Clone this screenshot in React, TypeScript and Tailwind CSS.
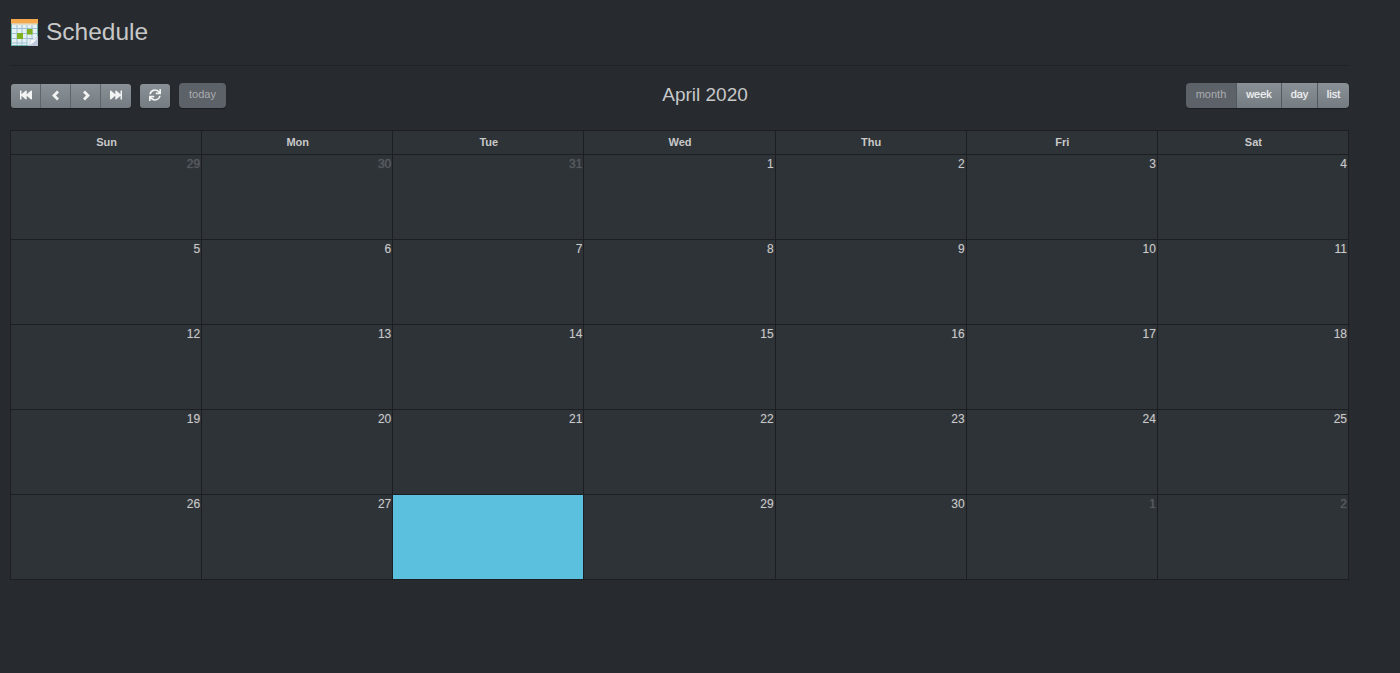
import React from "react";
import { FaFastBackward, FaFastForward, FaSync } from "react-icons/fa";

const days = ["Sun", "Mon", "Tue", "Wed", "Thu", "Fri", "Sat"];
const cells: { n: number; muted?: boolean; today?: boolean }[] = [
  { n: 29, muted: true }, { n: 30, muted: true }, { n: 31, muted: true },
  ...Array.from({ length: 30 }, (_, i) => ({ n: i + 1, today: i === 27 })),
  { n: 1, muted: true }, { n: 2, muted: true },
];

function CalendarIcon() {
  return (
    <svg width="27" height="27" viewBox="0 0 27 27" className="shrink-0">
      <rect x="0" y="0" width="27" height="27" fill="#e4f0f2" />
      <rect x="0" y="0" width="27" height="4.5" fill="#f4a94e" />
      <rect x="0" y="4.5" width="27" height="1" fill="#e0c89a" />
      <path d="M1 9.5H26M1 14.5H26M1 19.5H22M1 24H16M6 6V26M11 6V26M16 6V26M21 6V20" stroke="#9fc0d4" strokeWidth="1" />
      <rect x="6" y="14" width="6" height="6" fill="#7fb01f" />
      <rect x="16" y="10" width="5.5" height="5.5" fill="#7fb01f" />
      <path d="M17 27L27 17V27Z" fill="#bfcbdc" />
      <path d="M17 27C20 24.5 19.5 22 19 20C22 21 25 20 27 17C26 21 23 25 17 27Z" fill="#f6f8fb" stroke="#a7b7ca" strokeWidth="0.5" />
      <path d="M0.4 4.5V26.6H17M26.6 4.5V17" fill="none" stroke="#3d9a96" strokeWidth="0.8" />
    </svg>
  );
}

function Chevron({ dir }: { dir: "left" | "right" }) {
  return (
    <svg width="10" height="11" viewBox="0 0 10 11">
      <path
        d={dir === "left" ? "M7 1.5L3 5.5L7 9.5" : "M3 1.5L7 5.5L3 9.5"}
        fill="none"
        stroke="#f2f3f3"
        strokeWidth="2.8"
      />
    </svg>
  );
}

const btn = "h-full flex items-center justify-center bg-gradient-to-b from-[#8a9196] to-[#747c82] text-[#f2f3f3] pb-px";
const heavy = "[text-shadow:0_0_1px_rgba(255,255,255,0.55)]";

export default function App() {
  return (
    <div className="min-h-[673px] w-[1400px] bg-[#272b30] pl-[10px] font-['Liberation_Sans',Arial,sans-serif]">
      <div className="w-[1339px]">
        <div className="flex h-[66px] items-start gap-[8px] border-b border-[#1f2226] pt-[19px] pl-px">
          <CalendarIcon />
          <h1 className="text-[24.5px] leading-[25px] text-[#c8c8c8]">Schedule</h1>
        </div>
        <div className="mt-[17px] flex h-[25px] items-center justify-between">
          <div className="flex h-full items-center">
            <div className="ml-px flex h-[24px] overflow-hidden rounded-[3px] shadow-[0_1px_1px_#1c1e22]">
              <button className={`${btn} w-[30px] border-r border-[#5f666b] text-[12px]`}><FaFastBackward /></button>
              <button className={`${btn} w-[30px] border-r border-[#5f666b]`}><Chevron dir="left" /></button>
              <button className={`${btn} w-[30px] border-r border-[#5f666b]`}><Chevron dir="right" /></button>
              <button className={`${btn} w-[30px] text-[12px]`}><FaFastForward /></button>
            </div>
            <button className={`${btn} ml-[9px] !h-[24px] w-[30px] rounded-[3px] text-[12px] shadow-[0_1px_1px_#1c1e22]`}><FaSync /></button>
            <button className="ml-[9px] h-[25px] w-[47px] rounded-[4px] bg-[#5d6268] pb-[2px] text-[11px] text-[#a9acb0] shadow-[0_1px_1px_#1c1e22]">today</button>
          </div>
          <h2 className="pr-[2px] pb-[2px] text-[19px] leading-[24px] text-[#c8c8c8]">April 2020</h2>
          <div className="flex h-[25px] overflow-hidden rounded-[4px] text-[11px] shadow-[0_1px_1px_#1c1e22]">
            <button className="h-full w-[50px] bg-[#5d6268] pb-[2px] text-[#a9acb0]">month</button>
            <button className={`${btn} ${heavy} !pb-[2px] w-[45px] border-l border-[#53595e]`}>week</button>
            <button className={`${btn} ${heavy} !pb-[2px] w-[36px] border-l border-[#53595e]`}>day</button>
            <button className={`${btn} ${heavy} !pb-[2px] w-[32px] border-l border-[#53595e]`}>list</button>
          </div>
        </div>
        <div className="mt-[22px] grid grid-cols-7 border-t border-l border-[#1c1e22]">
          {days.map((d) => (
            <div key={d} className="flex h-[24px] items-center justify-center border-r border-b border-[#1c1e22] bg-[#2e3338] pl-px text-[11px] font-bold text-[#c8c8c8]">
              {d}
            </div>
          ))}
          {cells.map((c, i) => (
            <div
              key={i}
              className={`h-[85px] border-r border-b border-[#1c1e22] pr-[1px] text-right text-[12px] leading-[18px] [text-shadow:0_0_1px_rgba(200,200,200,0.35)] ${
                c.today ? "bg-[#5bc0de]" : "bg-[#2e3338]"
              } ${c.muted ? "text-[#53585d]" : "text-[#c8c8c8]"}`}
            >
              {c.today ? null : c.n}
            </div>
          ))}
        </div>
      </div>
    </div>
  );
}
